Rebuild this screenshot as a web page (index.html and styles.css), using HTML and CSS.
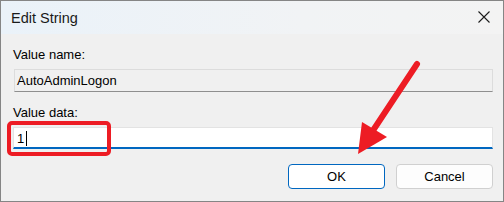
FILE: index.html
```html
<!DOCTYPE html>
<html lang="en">
<head>
    <meta charset="UTF-8">
    <meta name="viewport" content="width=device-width, initial-scale=1.0">
    <title>Edit String</title>
    <link rel="stylesheet" href="styles.css">
</head>
<body>
    <div class="dialog">
        <div class="titlebar">
            <span class="title">Edit String</span>
            <svg class="close" width="12" height="12" viewBox="0 0 12 12">
                <path d="M0.5 0.5 L11.5 11.5 M11.5 0.5 L0.5 11.5" stroke="#1b1b1b" stroke-width="1.1" fill="none"/>
            </svg>
        </div>
        <div class="content">
            <div class="label">Value name:</div>
            <div class="field readonly">AutoAdminLogon</div>
            <div class="label second">Value data:</div>
            <div class="field edit"><span>1</span><span class="caret"></span></div>
            <div class="actions">
                <div class="btn primary">OK</div>
                <div class="btn">Cancel</div>
            </div>
        </div>

        <!-- annotation drawn over the dialog -->
        <svg class="markup" width="504" height="202" viewBox="0 0 504 202">
            <rect x="9" y="123" width="100" height="31" rx="3" fill="none" stroke="#ed1c24" stroke-width="4"/>
            <line x1="417" y1="64" x2="372" y2="132" stroke="#ed1c24" stroke-width="6" stroke-linecap="round"/>
            <polygon points="358,154 362,122 387,137" fill="#ed1c24"/>
        </svg>
    </div>
</body>
</html>
```

FILE: styles.css
```css
body {
    margin: 0;
    font-family: "Liberation Sans", Arial, sans-serif;
    background: #f0f0f0;
}
.dialog {
    position: relative;
    width: 504px;
    height: 202px;
    box-sizing: border-box;
    border: 1px solid #858585;
    background: #f0f0f0;
    display: flex;
    flex-direction: column;
}
.titlebar {
    height: 33px;
    flex: none;
    display: flex;
    align-items: center;
    justify-content: space-between;
    padding: 0 13px 0 10px;
    background: linear-gradient(to right, #eaf2f9, #f1f3f5 60%, #f3f3f3);
}
.title {
    font-size: 14.5px;
    color: #1a1a1a;
    padding-top: 1px;
}
.close {
    display: block;
    margin-top: -2px;
}
.content {
    flex: 1;
    display: flex;
    flex-direction: column;
    padding: 13px 10px 0 12px;
}
.label {
    font-size: 13px;
    line-height: 16px;
    color: #000;
    margin-bottom: 6px;
}
.label.second {
    margin-top: 13px;
}
.field {
    box-sizing: border-box;
    font-size: 13px;
    color: #000;
    display: flex;
    align-items: center;
    padding-left: 2px;
}
.field.readonly {
    height: 23px;
    margin-left: 1px;
    border: 1px solid #dcdcdc;
    border-bottom-color: #8f8f8f;
    background: #f0f0f0;
}
.field.edit {
    height: 22px;
    border: 1px solid #e3e3e3;
    border-bottom: 2px solid #0067c0;
    background: #fff;
    padding-left: 3px;
    padding-top: 1px;
}
.caret {
    width: 1px;
    height: 15px;
    background: #000;
    margin-left: 2px;
}
.actions {
    display: flex;
    justify-content: flex-end;
    gap: 11px;
    margin-top: 15px;
}
.btn {
    width: 97px;
    height: 25px;
    box-sizing: border-box;
    border: 1px solid #d0d0d0;
    border-radius: 4px;
    background: #fdfdfd;
    font-size: 13px;
    color: #000;
    display: flex;
    align-items: center;
    justify-content: center;
}
.btn.primary {
    border-color: #0067c0;
    background: #fff;
}
.markup {
    position: absolute;
    left: -1px;
    top: -1px;
    pointer-events: none;
}
```
